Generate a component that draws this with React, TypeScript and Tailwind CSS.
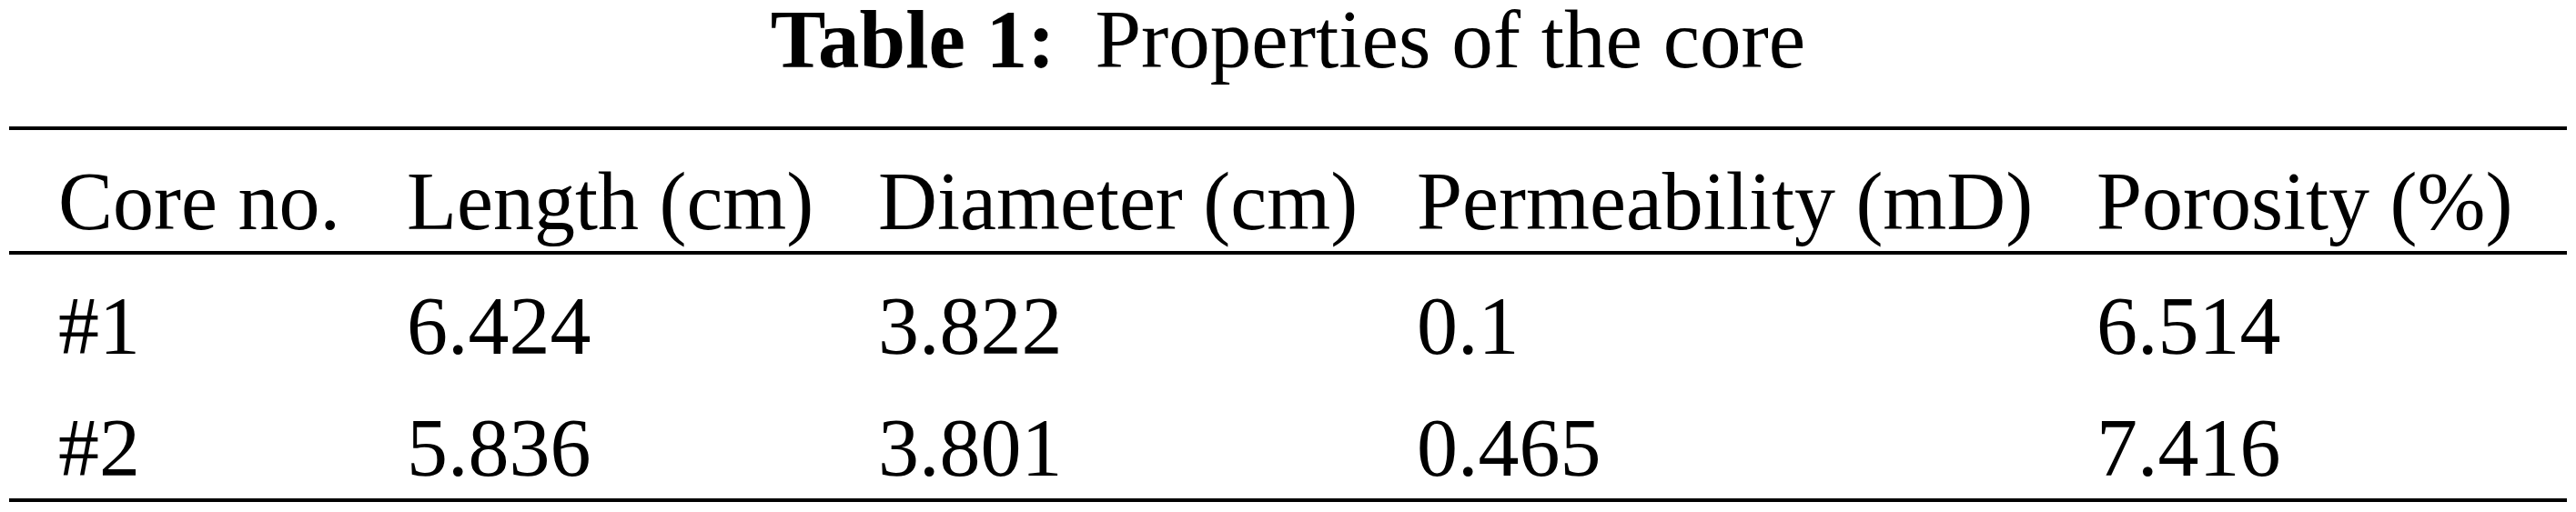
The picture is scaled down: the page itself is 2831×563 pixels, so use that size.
const headers = [
  "Core no.",
  "Length (cm)",
  "Diameter (cm)",
  "Permeability (mD)",
  "Porosity (%)",
];

const rows = [
  ["#1", "6.424", "3.822", "0.1", "6.514"],
  ["#2", "5.836", "3.801", "0.465", "7.416"],
];

const cols = "grid grid-cols-[383px_518px_592px_747px_1fr]";

const App = () => {
  return (
    <div
      className="w-[2831px] h-[563px] bg-white text-black text-[90px] overflow-hidden"
      style={{ fontFamily: '"Liberation Serif", "Times New Roman", serif' }}
    >
      <div className="flex justify-center pt-[1px] text-[91px] leading-[85px] whitespace-nowrap">
        <span className="font-bold">Table 1:</span>
        <span className="ml-[44px]">Properties of the core</span>
      </div>

      <div className="mt-[53px] mx-[10px] border-t-4 border-b-4 border-black">
        <div className={`${cols} pl-[54px] pt-[34px] pb-[9px] leading-[90px] border-b-4 border-black whitespace-nowrap`}>
          {headers.map((h) => (
            <div key={h}>{h}</div>
          ))}
        </div>
        {rows.map((r) => (
          <div
            key={r[0]}
            className={`${cols} pl-[54px] pt-[34px] pb-[10px] leading-[90px] whitespace-nowrap`}
          >
            {r.map((c, i) => (
              <div key={i}>{c}</div>
            ))}
          </div>
        ))}
      </div>
    </div>
  );
};

export default App;
